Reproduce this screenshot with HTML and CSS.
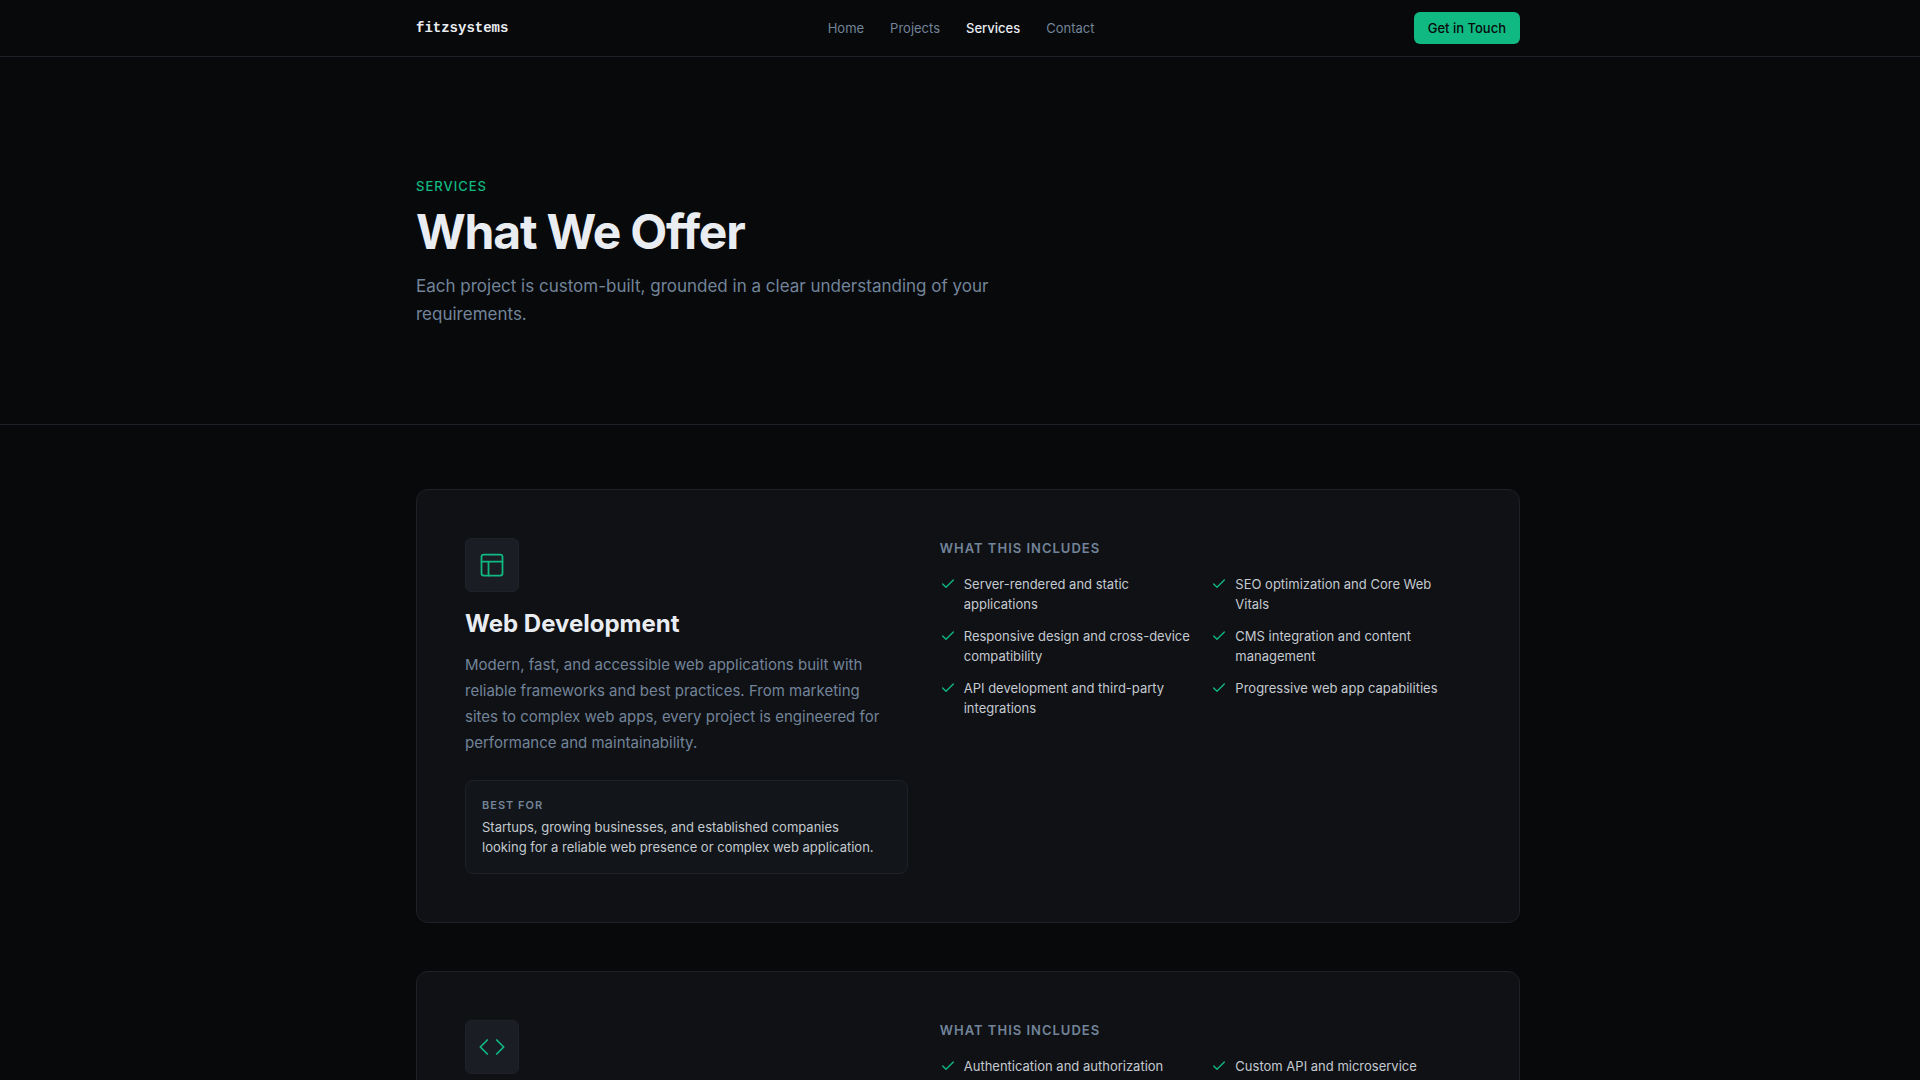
FILE: index.html
```html
<!DOCTYPE html>
<html lang="en">
<head>
<meta charset="utf-8">
<meta name="viewport" content="width=device-width, initial-scale=1">
<title>Services - fitzsystems</title>
<link rel="stylesheet" href="styles.css">
</head>
<body>
<svg class="sprite" aria-hidden="true">
  <symbol id="check" viewBox="0 0 24 24"><path d="M20 6 9 17l-5-5"/></symbol>
</svg>

<header class="site-header">
  <div class="container bar">
    <a class="logo" href="#">fitzsystems</a>
    <nav class="nav" aria-label="Main">
      <a href="#">Home</a>
      <a href="#">Projects</a>
      <a href="#" class="active" aria-current="page">Services</a>
      <a href="#">Contact</a>
    </nav>
    <button class="cta" type="button">Get in Touch</button>
  </div>
</header>

<main>
  <section class="hero">
    <div class="container">
      <p class="eyebrow">SERVICES</p>
      <h1>What We Offer</h1>
      <p class="lead">Each project is custom-built, grounded in a clear understanding of your requirements.</p>
    </div>
  </section>

  <section class="services">
    <div class="container stack">
      <article class="card">
        <div class="summary">
          <div class="tile">
            <svg viewBox="0 0 24 24" aria-hidden="true"><rect width="18" height="18" x="3" y="3" rx="2"/><path d="M3 9h18M9 21V9"/></svg>
          </div>
          <h2>Web Development</h2>
          <p class="description">Modern, fast, and accessible web applications built with reliable frameworks and best practices. From marketing sites to complex web apps, every project is engineered for performance and maintainability.</p>
          <div class="best-for">
            <h3>BEST FOR</h3>
            <p>Startups, growing businesses, and established companies looking for a reliable web presence or complex web application.</p>
          </div>
        </div>
        <div class="includes">
          <h3>WHAT THIS INCLUDES</h3>
          <ul>
            <li><svg aria-hidden="true"><use href="#check"/></svg><span>Server-rendered and static applications</span></li>
            <li><svg aria-hidden="true"><use href="#check"/></svg><span>SEO optimization and Core Web Vitals</span></li>
            <li><svg aria-hidden="true"><use href="#check"/></svg><span>Responsive design and cross-device compatibility</span></li>
            <li><svg aria-hidden="true"><use href="#check"/></svg><span>CMS integration and content management</span></li>
            <li><svg aria-hidden="true"><use href="#check"/></svg><span>API development and third-party integrations</span></li>
            <li><svg aria-hidden="true"><use href="#check"/></svg><span>Progressive web app capabilities</span></li>
          </ul>
        </div>
      </article>

      <article class="card">
        <div class="summary">
          <div class="tile">
            <svg viewBox="0 0 24 24" aria-hidden="true"><path d="m16 18 6-6-6-6M8 6l-6 6 6 6"/></svg>
          </div>
        </div>
        <div class="includes">
          <h3>WHAT THIS INCLUDES</h3>
          <ul>
            <li><svg aria-hidden="true"><use href="#check"/></svg><span>Authentication and authorization</span></li>
            <li><svg aria-hidden="true"><use href="#check"/></svg><span>Custom API and microservice</span></li>
          </ul>
        </div>
      </article>
    </div>
  </section>
</main>
</body>
</html>
```
FILE: styles.css
```css
:root {
  --bg: #08090b;
  --card: #101115;
  --raised: #12161a;
  --tile: #1a1d24;
  --line: #1e2127;
  --heading: #e9edf2;
  --text: #c4cad0;
  --muted: #728499;
  --accent: #10b981;
}

* { box-sizing: border-box; margin: 0; padding: 0; }

body {
  background: var(--bg);
  color: var(--text);
  font: 400 13px/20px Inter, "Liberation Sans", sans-serif;
  padding-left: 16px;
}

a { color: inherit; text-decoration: none; }
ul { list-style: none; }
svg { fill: none; stroke: currentColor; stroke-linecap: round; stroke-linejoin: round; }
.sprite { display: none; }

.container { max-width: 1152px; margin: 0 auto; padding: 0 24px; }

.site-header, .hero {
  border-bottom: 1px solid var(--line);
  margin-left: -16px;
  padding-left: 16px;
}

.bar { display: flex; align-items: center; justify-content: space-between; height: 56px; }
.logo { color: var(--heading); font: 700 14px/20px "Liberation Mono", monospace; }
.nav { display: flex; gap: 26px; color: var(--muted); }
.nav .active { color: var(--heading); font-weight: 500; }
.cta {
  height: 32px;
  padding: 0 14px;
  border: 0;
  border-radius: 6px;
  background: var(--accent);
  color: var(--bg);
  font: inherit;
  font-weight: 500;
}

.hero { padding-top: 119px; padding-bottom: 96px; }
.eyebrow { color: var(--accent); font-weight: 500; letter-spacing: 1px; }
h1 {
  margin: 12px 0 16px;
  color: var(--heading);
  font-size: 48px;
  line-height: 48px;
  letter-spacing: -0.025em;
}
.lead { max-width: 640px; color: var(--muted); font-size: 17px; line-height: 28px; }

.services { padding: 64px 0; }
.stack { display: grid; gap: 48px; }

.card {
  display: grid;
  grid-template-columns: 1fr 1.2fr;
  gap: 32px;
  min-height: 434px;
  padding: 48px;
  border: 1px solid var(--line);
  border-radius: 12px;
  background: var(--card);
}

.tile {
  display: grid;
  place-items: center;
  width: 54px;
  height: 54px;
  border: 1px solid #1e2128;
  border-radius: 6px;
  background: var(--tile);
  color: var(--accent);
}
.tile svg { width: 28px; height: 28px; stroke-width: 1.5; }

h2 { margin: 16px 0 12px; color: var(--heading); font-size: 24px; line-height: 32px; }
.description { max-width: 428px; color: var(--muted); font-size: 15px; line-height: 26px; }

.best-for {
  margin-top: 24px;
  padding: 16px;
  border: 1px solid var(--line);
  border-radius: 8px;
  background: var(--raised);
}
h3 { color: var(--muted); font-size: 13px; font-weight: 600; letter-spacing: 1px; }
.best-for h3 { margin-bottom: 4px; font-size: 11px; line-height: 16px; }
.best-for p { max-width: 396px; }

.includes ul {
  display: grid;
  grid-template-columns: 1fr 1fr;
  gap: 12px;
  margin-top: 16px;
}
.includes li { display: flex; gap: 8px; padding-right: 6px; }
.includes svg {
  flex: none;
  width: 16px;
  height: 16px;
  margin-top: 2px;
  color: var(--accent);
  stroke-width: 2;
}

@media (max-width: 900px) {
  .card { grid-template-columns: 1fr; }
}
```
